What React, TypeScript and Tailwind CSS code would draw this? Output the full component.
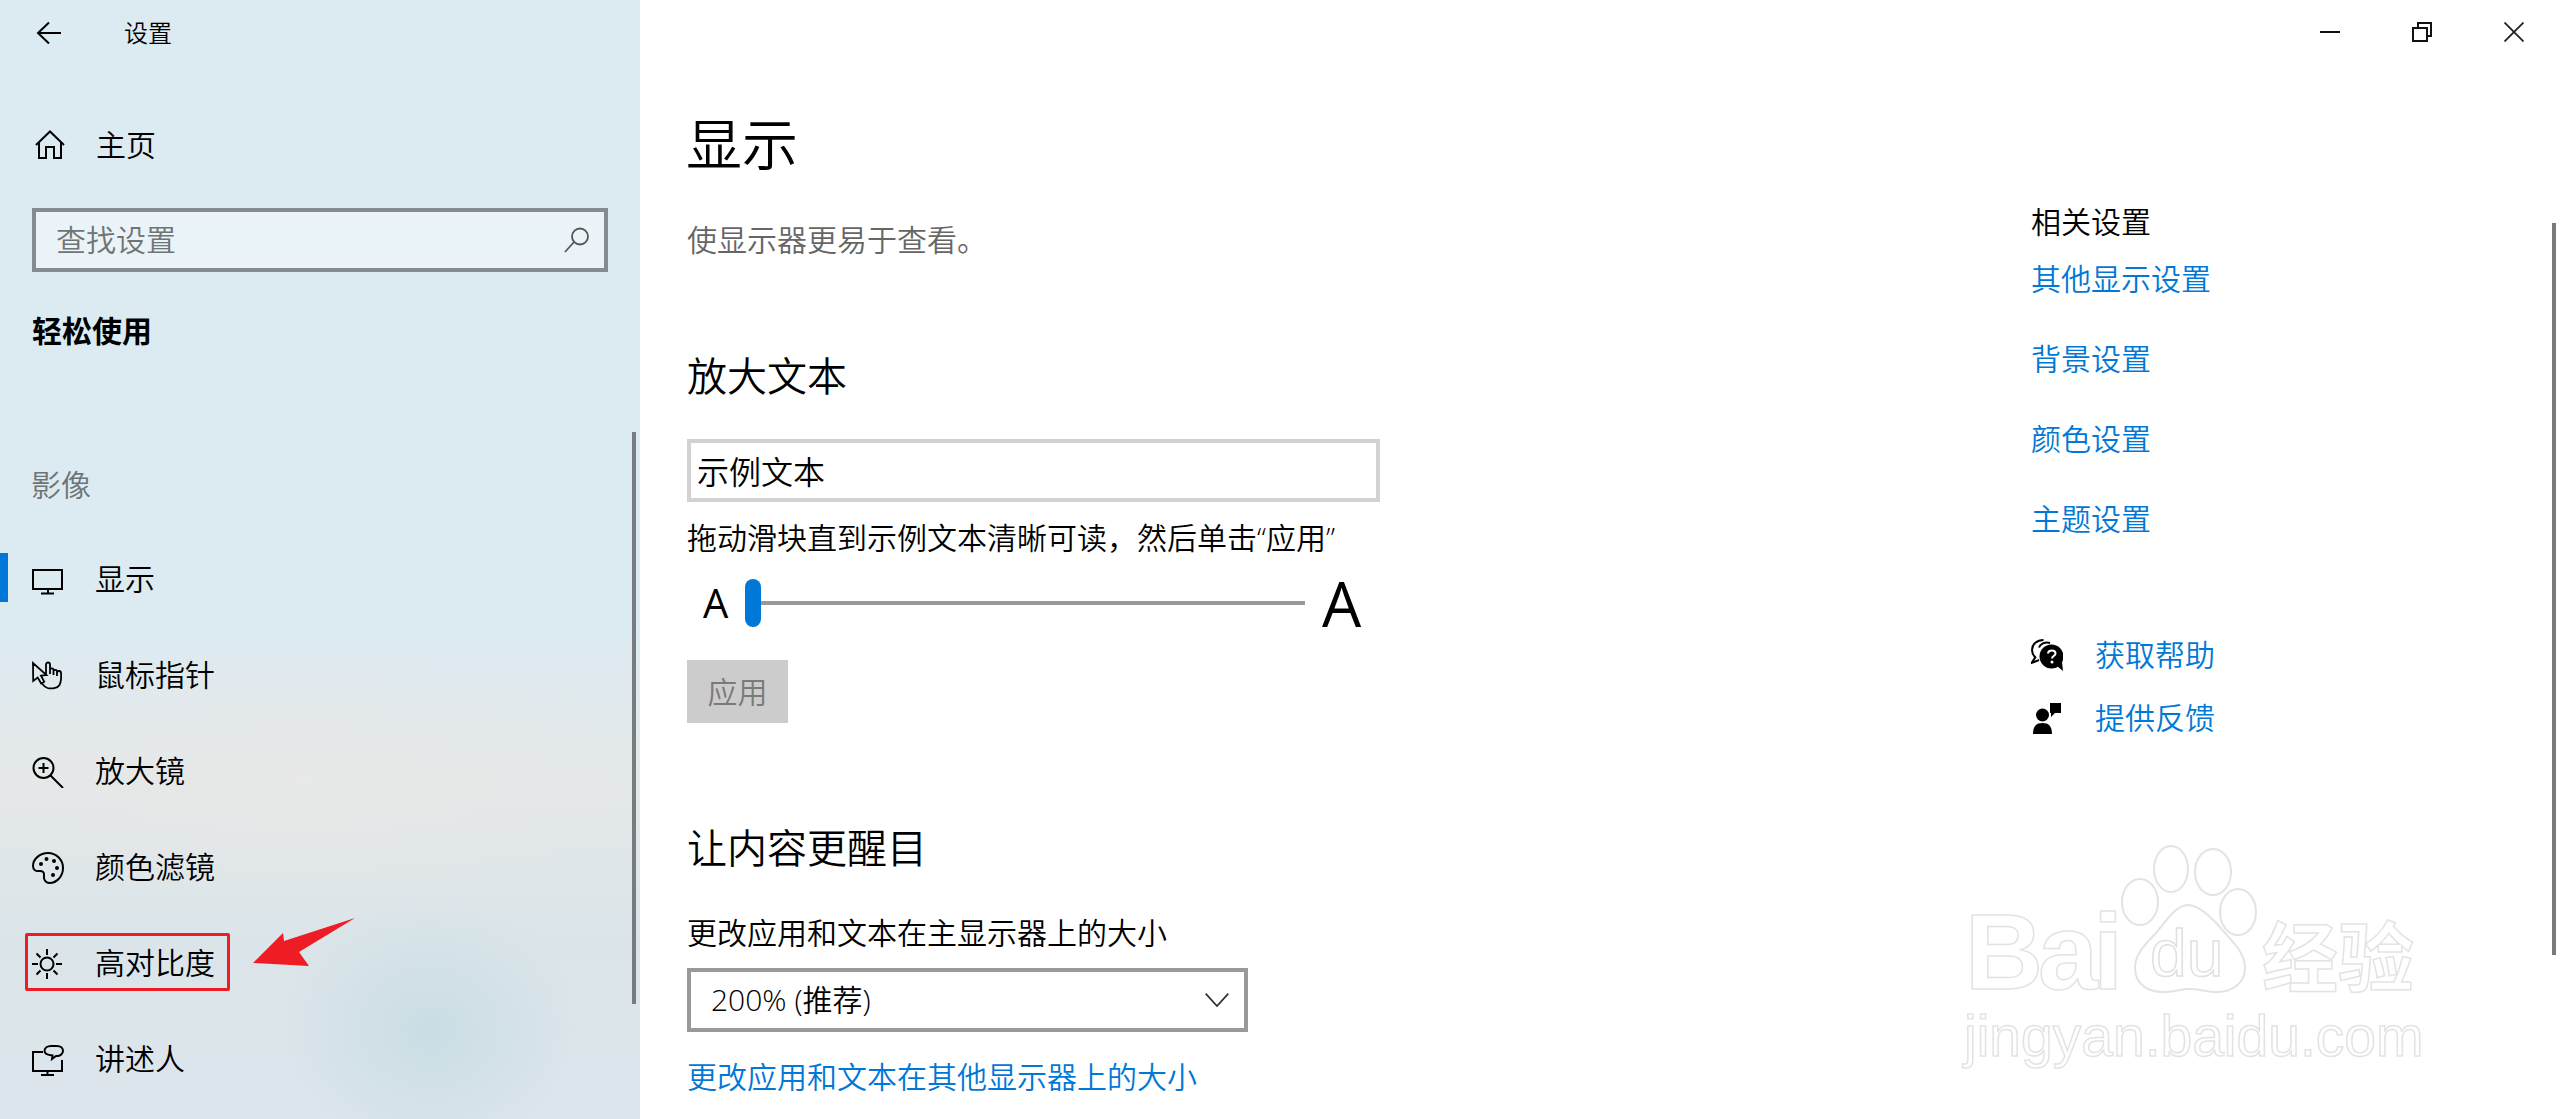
import React from "react";

const Ico = ({ children, w = 32, h = 32 }: { children: React.ReactNode; w?: number; h?: number }) => (
  <svg width={w} height={h} viewBox={`0 0 ${w} ${h}`} fill="none" stroke="#000" strokeWidth="2" className="shrink-0 block">
    {children}
  </svg>
);

const icons: Record<string, React.ReactNode> = {
  display: (
    <Ico>
      <path d="M1 6h29v19H1zM16 25v4M9 29.500h13" />
    </Ico>
  ),
  pointer: (
    <Ico>
      <path strokeWidth="1.800" d="M1 3l.2 18 4.500-3.500 3.500 6 3-1.800-3.200-6 5.500-.7zM14 15V4.500a2 2 0 0 1 4 0V14m0-4.500a2 2 0 0 1 3.500 0V15m0-4a2 2 0 0 1 3.500 0v5m0-3a2 2 0 0 1 4 0c.5 6 0 9-1.500 12-2 3.500-8 4-12 3-3-1-4.500-3-6-5" />
    </Ico>
  ),
  zoom: (
    <Ico>
      <circle cx="11.500" cy="12" r="10" />
      <path d="M18.500 19.500L31 32M11.500 7v10M6.500 12h10" />
    </Ico>
  ),
  palette: (
    <Ico>
      <path d="M16 1C8 1 1 7 1 14c0 4 3 5.500 6 5 3-.5 5.500 1 5 4-.5 3 .5 8 5.500 8C25 31 31 24 31 16 31 7.500 24 1 16 1z" />
      <circle cx="9" cy="12" r="2" fill="#000" stroke="none" />
      <circle cx="14.500" cy="7" r="2" fill="#000" stroke="none" />
      <circle cx="22" cy="9" r="2" fill="#000" stroke="none" />
      <circle cx="25" cy="16" r="2" fill="#000" stroke="none" />
      <circle cx="21" cy="23" r="2" fill="#000" stroke="none" />
    </Ico>
  ),
  sun: (
    <Ico>
      <circle cx="15" cy="16" r="6.500" />
      <path d="M15 1v6M15 25v6M0 16h6M24 16h6M4.500 5.500l4 4M21.500 22.500l4 4M25.500 5.500l-4 4M8.500 22.500l-4 4" />
    </Ico>
  ),
  narrator: (
    <Ico>
      <path d="M11 8H1v19h29V16M15.500 27v4M9 31h13" />
      <path d="M19 2h6c3.500 0 6 2 6 5s-3 5-6 5h-1l-4 3 .5-3.500C16 11 12.500 9.500 12.500 7c0-3 3-5 6.500-5z" />
    </Ico>
  ),
};

const rows = [
  { k: "display", t: "显示", active: true },
  { k: "pointer", t: "鼠标指针" },
  { k: "zoom", t: "放大镜" },
  { k: "palette", t: "颜色滤镜" },
  { k: "sun", t: "高对比度" },
  { k: "narrator", t: "讲述人" },
];

const links = ["其他显示设置", "背景设置", "颜色设置", "主题设置"];

export default function App() {
  return (
    <div className="relative w-[2560px] h-[1119px] overflow-hidden flex bg-white text-black [font-weight:350] text-[30px] leading-[40px] [font-family:'Open_Sans','Noto_Sans_CJK_SC',sans-serif]">
      {/* Sidebar */}
      <aside className="relative w-[640px] h-full shrink-0 bg-[radial-gradient(ellipse_150px_130px_at_430px_1030px,#cadde4_0%,rgba(202,221,228,0)_100%),radial-gradient(ellipse_420px_120px_at_300px_780px,#e7e8e7_0%,rgba(231,232,231,0)_100%),linear-gradient(to_bottom,#dcebf2_0%,#dcebf2_55%,#e4e8e9_70%,#dbe5e9_84%,#dce5ec_100%)]">
        <div className="h-[66px] flex items-center pl-[36px]">
          <svg width="26" height="24" viewBox="0 0 26 24" fill="none" stroke="#000" strokeWidth="2" className="shrink-0">
            <path d="M13 1.500L2 12l11 10.500M2 12h23" />
          </svg>
          <span className="ml-[62px] text-[24px]">设置</span>
        </div>
        <div className="mt-[47px] h-[64px] flex items-center pl-[35px]">
          <svg width="30" height="30" viewBox="0 0 30 30" fill="none" stroke="#000" strokeWidth="2" className="shrink-0">
            <path d="M1 15L15 1.500 29 15M4 12.500V28h7V17h8v11h7V12.500" />
          </svg>
          <span className="ml-[31px]">主页</span>
        </div>
        <div className="ml-[32px] mt-[31px] w-[576px] h-[64px] border-4 border-[#848c90] bg-[#eaf3f7] flex items-center justify-between pl-[20px] pr-[14px] text-[#6f7476]">
          <span>查找设置</span>
          <svg width="26" height="26" viewBox="0 0 26 26" fill="none" stroke="#555" strokeWidth="1.800" className="shrink-0">
            <circle cx="16" cy="9.500" r="8" />
            <path d="M10 15L1 25" />
          </svg>
        </div>
        <div className="ml-[32px] mt-[39px] font-bold">轻松使用</div>
        <div className="ml-[31px] mt-[114px] text-[#6e7476]">影像</div>
        <nav className="mt-[27px] flex flex-col">
          {rows.map((r) => (
            <div key={r.t} className="relative h-[96px] flex items-center pl-[32px] gap-[31px]">
              {r.active && <span className="absolute left-0 top-[21px] w-2 h-[49px] bg-[#0078d7]" />}
              {icons[r.k]}
              <span className="-translate-y-px">{r.t}</span>
            </div>
          ))}
        </nav>
        <span className="absolute left-[632px] top-[432px] w-1 h-[572px] bg-[#787c7e]" />
      </aside>

      {/* Main */}
      <main className="flex-1 flex flex-col">
        <div className="h-[64px] flex justify-end shrink-0">
          <div className="w-[92px] flex items-center justify-center">
            <span className="w-5 h-0.5 bg-[#111]" />
          </div>
          <div className="w-[92px] flex items-center justify-center">
            <svg width="20" height="20" viewBox="0 0 20 20" fill="none" stroke="#111" strokeWidth="2">
              <path d="M1 6h14v13H1zM6 5V1h13v13h-3" />
            </svg>
          </div>
          <div className="w-[92px] flex items-center justify-center">
            <svg width="20" height="20" viewBox="0 0 20 20" fill="none" stroke="#222" strokeWidth="1.800">
              <path d="M.5.500l19 19M19.500.500l-19 19" />
            </svg>
          </div>
        </div>
        <div className="flex flex-1">
          <section className="pl-[47px] w-[1391px] shrink-0">
            <h1 className="mt-[47px] -ml-px text-[56px] leading-[64px]">显示</h1>
            <p className="mt-[45px] text-[#666]">使显示器更易于查看。</p>
            <h2 className="mt-[88px] text-[40px] leading-[56px]">放大文本</h2>
            <div className="mt-[35px] w-[693px] h-[63px] border-4 border-[#d2d2d2] flex items-center pl-[6px] pt-[2px] text-[32px]">示例文本</div>
            <p className="mt-4">拖动滑块直到示例文本清晰可读，然后单击“应用”</p>
            <div className="mt-[21px] h-[48px] flex items-center">
              <span className="w-[58px] pl-4 font-normal text-[40px] leading-[48px]">A</span>
              <span className="w-4 h-[48px] rounded-full bg-[#0078d7]" />
              <span className="w-[544px] h-1 bg-[#999]" />
              <span className="ml-[17px] font-normal text-[62px] leading-[48px]">A</span>
            </div>
            <button className="mt-[33px] block w-[101px] h-[63px] bg-[#ccc] text-[#7a7a7a]">应用</button>
            <h2 className="mt-[97px] text-[40px] leading-[56px]">让内容更醒目</h2>
            <p className="mt-[37px]">更改应用和文本在主显示器上的大小</p>
            <div className="mt-[15px] w-[561px] h-[64px] border-4 border-[#999] flex items-center justify-between pl-[20px] pr-[15px]">
              <span>200% (推荐)</span>
              <svg width="24" height="14" viewBox="0 0 24 14" fill="none" stroke="#333" strokeWidth="1.800">
                <path d="M.7.700L12 13 23.300.700" />
              </svg>
            </div>
            <p className="mt-[25px] text-[#0078d7]">更改应用和文本在其他显示器上的大小</p>
          </section>
          <section className="text-[#0078d7]">
            <p className="mt-[138px] text-black">相关设置</p>
            <div className="mt-[17px] flex flex-col gap-[40px]">
              {links.map((l) => (
                <p key={l}>{l}</p>
              ))}
            </div>
            <div className="mt-[96px] flex items-center gap-[32px]">
              <svg width="32" height="32" viewBox="0 0 32 32" className="shrink-0">
                <path d="M12.500 1C6 1 1 5 1 11c0 3 1.300 5.500 3.300 7.300L.5 24l7.500-3" fill="none" stroke="#000" strokeWidth="2" />
                <path d="M8 8.500C9 5 14 2.500 19 4" fill="none" stroke="#000" strokeWidth="2" />
                <circle cx="20.500" cy="17.500" r="12" fill="#000" />
                <path d="M26 27l6 5-1-9z" fill="#000" />
                <path d="M17 14.500c.3-4 7.500-4 7.500 0 0 2.500-3.500 2.500-3.500 5" fill="none" stroke="#fff" strokeWidth="2" />
                <circle cx="21" cy="23" r="1.500" fill="#fff" />
              </svg>
              <span>获取帮助</span>
            </div>
            <div className="mt-[23px] flex items-center gap-[32px]">
              <svg width="32" height="32" viewBox="0 0 32 32" className="shrink-0">
                <circle cx="11.500" cy="13" r="6.500" fill="#000" />
                <path d="M2 32c0-8 3.500-11 9.500-11s9.500 3 9.500 11z" fill="#000" />
                <path d="M19 1h11v10h-6l-4 4v-4h-1z" fill="#000" />
              </svg>
              <span>提供反馈</span>
            </div>
          </section>
        </div>
      </main>

      {/* Scrollbar of the content pane */}
      <span className="absolute left-[2552px] top-[223px] w-1 h-[732px] bg-[#7a7a7a]" />

      {/* Red annotation */}
      <span className="absolute left-[25px] top-[933px] w-[205px] h-[58px] border-[3px] border-[#ee1c25] rounded-[2px]" />
      <svg className="absolute left-[250px] top-[915px]" width="110" height="55" viewBox="0 0 110 55">
        <path d="M3 48L33 18l1 8 71-23-56 34 10 14z" fill="#ee1c25" />
      </svg>

      {/* Watermark */}
      <div className="absolute left-[1965px] top-[892px] text-[108px] leading-[120px] font-bold tracking-[-5px] text-white [font-family:'Liberation_Sans',sans-serif] [-webkit-text-stroke:1.500px_#e3e3e3]">Bai</div>
      <svg className="absolute left-[2120px] top-[845px]" width="140" height="150" viewBox="0 0 140 150" fill="#fff" stroke="#e3e3e3" strokeWidth="2">
        <ellipse cx="20" cy="57" rx="18" ry="23" />
        <ellipse cx="51" cy="24" rx="17" ry="23" />
        <ellipse cx="93" cy="27" rx="18" ry="23" />
        <ellipse cx="118" cy="67" rx="18" ry="23" />
        <path d="M68 60c-12 0-22 16-32 28-10 11-21 20-21 35 0 17 14 24 28 24 10 0 18-3 27-3s17 3 27 3c14 0 28-8 28-24 0-14-10-24-20-35-10-12-25-28-37-28z" />
      </svg>
      <div className="absolute left-[2150px] top-[917px] text-[66px] leading-[72px] font-normal text-white [font-family:'Liberation_Sans',sans-serif] [-webkit-text-stroke:1.500px_#e0e0e0]">du</div>
      <div className="absolute left-[2262px] top-[905px] text-[76px] leading-[96px] font-bold text-white [font-family:'Noto_Sans_CJK_SC',sans-serif] [-webkit-text-stroke:1.500px_#e3e3e3]">经验</div>
      <div className="absolute left-[1964px] top-[1000px] text-[57px] leading-[72px] font-normal text-white [font-family:'Liberation_Sans',sans-serif] [-webkit-text-stroke:1.500px_#e3e3e3]">jingyan.baidu.com</div>
    </div>
  );
}
